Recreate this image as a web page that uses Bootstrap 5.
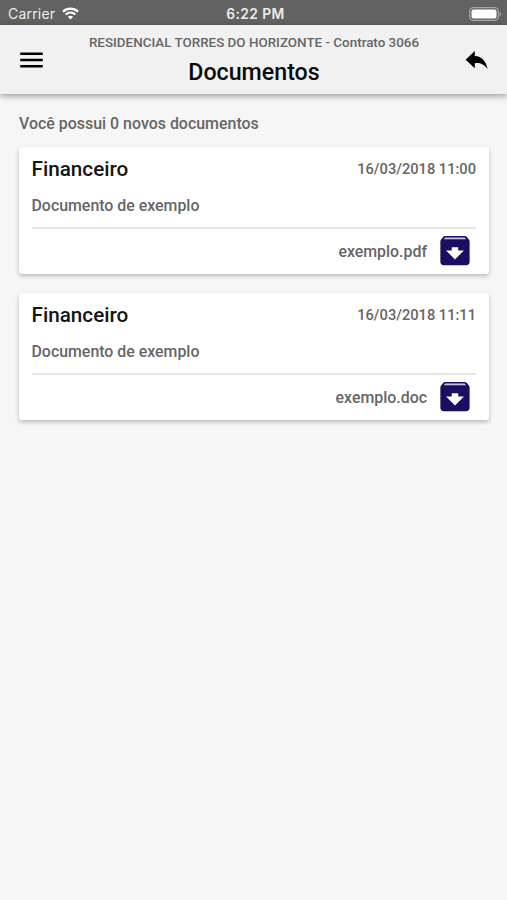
<!DOCTYPE html>
<html lang="pt-BR">
<head>
<meta charset="utf-8">
<meta name="viewport" content="width=device-width, initial-scale=1">
<title>Documentos</title>
<link href="https://cdn.jsdelivr.net/npm/bootstrap@5.3.0/dist/css/bootstrap.min.css" rel="stylesheet">
<script src="https://cdn.jsdelivr.net/npm/bootstrap@5.3.0/dist/js/bootstrap.bundle.min.js" defer></script>
<style>
body{background:#f6f6f6;color:#666;font-family:Roboto,"Liberation Sans",sans-serif;font-weight:500;line-height:1.25}
svg{display:block;flex:none}
.status-bar{height:25px;background:#626262;color:#ececec;font-size:14px;display:grid;grid-template-columns:1fr auto 1fr;padding:2px 5px 0 8px}
.carrier{font-family:Inter,sans-serif;font-weight:400;letter-spacing:.2px;gap:7px}
.clock{font-family:Inter,sans-serif;font-weight:600;font-size:13.8px;letter-spacing:.4px;padding:2px 0 0 1px}
.app-header{height:69px;background:#f1f1f1;box-shadow:0 2px 6px rgba(0,0,0,.38);padding:0 16px}
.contract{font-size:13.42px;line-height:16px;padding-top:10px}
.page-title{font-size:23.2px;line-height:28px;color:#0a0a0a;font-weight:500;padding-top:7px}
.icon-btn{color:#000;padding-top:1px}
.page-body{padding:20px 18px 0 19px}
.summary{font-size:15.95px;line-height:20px;margin-bottom:13px}
.doc-card{height:127px;border:0;border-radius:3px;box-shadow:0 2px 4px rgba(0,0,0,.25);margin-bottom:19px;padding:0 13px 0 12.5px}
.doc-title{font-size:20.7px;line-height:26px;color:#151515;font-weight:500}
.doc-date{font-size:14.65px;line-height:20px;padding-top:3px}
.doc-head{padding-top:9px;height:46px}
.doc-text{font-size:15.9px;line-height:20px;height:36px;padding-top:3px;border-bottom:2px solid #e6e6e6}
.doc-file{font-size:15.9px;height:43px;padding-right:2px}
.doc-file span{padding-top:2px}
.doc-file svg{color:#1b0e60}
</style>
</head>
<body>
<div class="status-bar align-items-center">
  <div class="carrier d-flex align-items-center"><span>Carrier</span>
    <svg width="17" height="13" viewBox="0 0 17 13" fill="none" stroke="#fff" stroke-width="2.2"><path d="M1 4.6C5.2.6 11.8.6 16 4.6M3.7 7.5c2.8-2.6 6.8-2.6 9.6 0"/><path d="M8.5 12.4L5.9 9.8c1.5-1.3 3.7-1.3 5.2 0z" fill="#fff" stroke="none"/></svg>
  </div>
  <div class="clock">6:22 PM</div>
  <svg class="ms-auto" width="33" height="14" viewBox="0 0 33 14"><rect x=".6" y=".6" width="28.8" height="12.8" rx="3.6" fill="none" stroke="#a6a6a6" stroke-width="1.2"/><rect x="2.5" y="2.4" width="25" height="9.2" rx="2" fill="#fff"/><path d="M30.7 4.7c1.8.8 1.8 3.8 0 4.6z" fill="#a6a6a6"/></svg>
</div>
<header class="app-header d-flex align-items-center justify-content-between position-relative">
  <a class="icon-btn" href="#" aria-label="Menu"><svg width="30" height="30" viewBox="0 0 24 24" fill="currentColor"><path d="M3.4 18h18v-2h-18v2zm0-5h18v-2h-18v2zm0-7v2h18V6h-18z"/></svg></a>
  <div class="text-center align-self-start">
    <div class="contract">RESIDENCIAL TORRES DO HORIZONTE - Contrato 3066</div>
    <h1 class="page-title m-0">Documentos</h1>
  </div>
  <a class="icon-btn" href="#" aria-label="Voltar"><svg width="29" height="29" viewBox="0 0 24 24" fill="currentColor"><path d="M10.6 8.3V4.2L3 11.3l7.6 7.2v-4.3c4.6-.4 7.6.9 10.6 5C20 13.2 17 8.6 10.6 8.3z"/></svg></a>
</header>
<main class="page-body">
  <p class="summary"><span>Você possui 0 novos documentos</span></p>
  <article class="card doc-card">
    <div class="doc-head d-flex justify-content-between"><h2 class="doc-title m-0">Financeiro</h2><time class="doc-date">16/03/2018 11:00</time></div>
    <div class="doc-text"><span>Documento de exemplo</span></div>
    <div class="doc-file d-flex align-items-center justify-content-end gap-2"><span>exemplo.pdf</span><svg width="39" height="39" viewBox="-.3 0 24 24" fill="currentColor"><path fill="#c4c0dc" d="M5 3.9h14v1.3H5z"/><path d="M20.54 5.23l-1.39-1.68C18.88 3.21 18.47 3 18 3H6c-.47 0-.88.21-1.16.55L3.46 5.23C3.17 5.57 3 6.02 3 6.5V19c0 1.1.9 2 2 2h14c1.1 0 2-.9 2-2V6.5c0-.48-.17-.93-.46-1.27zM12 17.5L6.5 12H10v-2h4v2h3.5L12 17.5zM5.12 5l.81-1h12l.94 1H5.12z"/></svg></div>
  </article>
  <article class="card doc-card">
    <div class="doc-head d-flex justify-content-between"><h2 class="doc-title m-0">Financeiro</h2><time class="doc-date">16/03/2018 11:11</time></div>
    <div class="doc-text"><span>Documento de exemplo</span></div>
    <div class="doc-file d-flex align-items-center justify-content-end gap-2"><span>exemplo.doc</span><svg width="39" height="39" viewBox="-.3 0 24 24" fill="currentColor"><path fill="#c4c0dc" d="M5 3.9h14v1.3H5z"/><path d="M20.54 5.23l-1.39-1.68C18.88 3.21 18.47 3 18 3H6c-.47 0-.88.21-1.16.55L3.46 5.23C3.17 5.57 3 6.02 3 6.5V19c0 1.1.9 2 2 2h14c1.1 0 2-.9 2-2V6.5c0-.48-.17-.93-.46-1.27zM12 17.5L6.5 12H10v-2h4v2h3.5L12 17.5zM5.12 5l.81-1h12l.94 1H5.12z"/></svg></div>
  </article>
</main>
</body>
</html>
